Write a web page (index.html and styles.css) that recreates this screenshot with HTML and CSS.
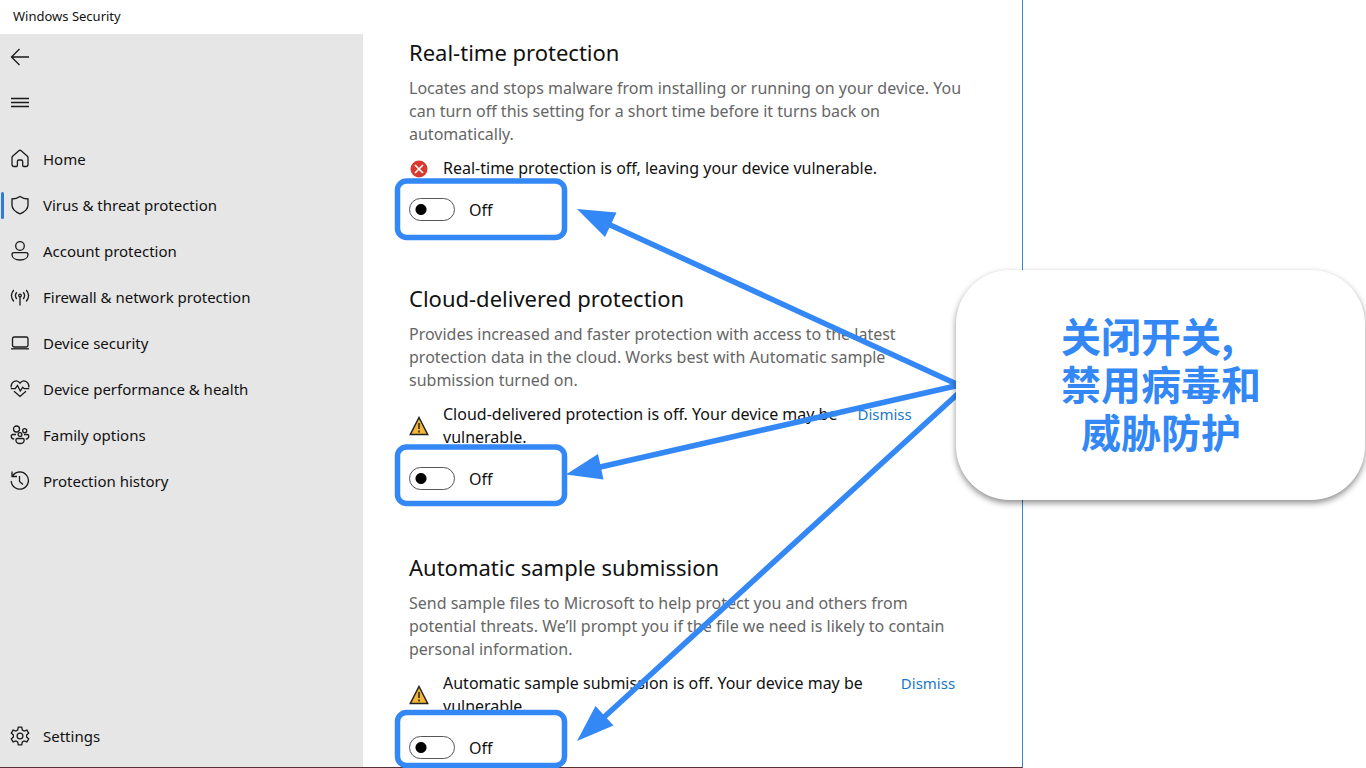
FILE: index.html
```html
<!DOCTYPE html>
<html lang="en">
<head>
<meta charset="UTF-8">
<meta name="viewport" content="width=device-width, initial-scale=1.0">
<title>Windows Security</title>
<link rel="stylesheet" href="styles.css">
</head>
<body>
  <div class="window">
    <header class="titlebar">Windows Security</header>
    <div class="columns">
      <aside class="sidebar">
        <button class="icon-button" type="button" aria-label="Back">
          <svg class="icon" viewBox="0 0 20 20"><path d="M19 10H1.500M9.500 2 1.500 10l8 8"/></svg>
        </button>
        <button class="icon-button" type="button" aria-label="Menu">
          <svg class="icon" viewBox="0 0 20 20"><path d="M1 5.500h18M1 9.500h18M1 13.500h18"/></svg>
        </button>
        <nav class="nav">
          <a href="#">
            <svg class="icon" viewBox="0 0 20 20"><path d="M2 8.500 Q2 7.800 2.600 7.200L8.800 1.700Q10 .8 11.200 1.700L17.400 7.200Q18 7.800 18 8.500V15.500Q18 17.500 16 17.500H13.700Q12.700 17.500 12.700 16.500V12.500Q12.700 11 11.200 11H8.900Q7.400 11 7.400 12.500V16.500Q7.400 17.500 6.400 17.500H4Q2 17.500 2 15.500Z"/></svg>
            Home
          </a>
          <a href="#" class="active">
            <svg class="icon" viewBox="0 0 20 20"><path d="M10 1.500Q13.500 4 18 4V10Q18 15.500 10 18.800Q2 15.500 2 10V4Q6.500 4 10 1.500Z"/></svg>
            Virus &amp; threat protection
          </a>
          <a href="#">
            <svg class="icon" viewBox="0 0 20 20"><circle cx="10" cy="5" r="4.300"/><path d="M4 11.700H16Q18 11.700 18 13.500C18 17 14.500 19 10 19S2 17 2 13.500Q2 11.700 4 11.700Z"/></svg>
            Account protection
          </a>
          <a href="#">
            <svg class="icon" viewBox="0 0 20 20"><circle cx="10" cy="8.500" r="1.300"/><path d="M10 10v8.500M6.800 5.300Q4 8.500 6.800 12M13.200 5.300Q16 8.500 13.200 12M3.800 3Q-1 8.500 3.800 14.500M16.200 3Q21 8.500 16.200 14.500"/></svg>
            Firewall &amp; network protection
          </a>
          <a href="#">
            <svg class="icon" viewBox="0 0 20 20"><rect x="2.500" y="4" width="15.500" height="10" rx="1.800"/><path d="M1 15.800h18"/></svg>
            Device security
          </a>
          <a href="#">
            <svg class="icon" viewBox="0 0 20 20"><path d="M1.200 8.500C.5 3 6.500-.5 10 4.200C13.500-.5 19.500 3 18.800 8.500M.8 9.700H5.200L7.500 6.500 10.300 12 12.700 8.200 14.200 9.700H19.200M4 12.200 10 17.500 16 12.200"/></svg>
            Device performance &amp; health
          </a>
          <a href="#">
            <svg class="icon" viewBox="0 0 20 20"><circle cx="6.500" cy="4" r="3"/><circle cx="14.700" cy="5.700" r="2"/><circle cx="10" cy="9.500" r="1.900"/><path d="M6 9.500H3Q1.200 9.500 1.200 11.200Q1.200 13.700 4.200 14.200M14 9.500H17Q18.800 9.500 18.800 11Q18.800 13.700 15.800 14.200M7.500 13.500H12.700Q14.200 13.500 14.200 15C14.200 17.500 12.500 18.500 10 18.500S5.900 17.500 5.900 15Q5.900 13.500 7.500 13.500Z"/></svg>
            Family options
          </a>
          <a href="#">
            <svg class="icon" viewBox="0 0 20 20"><path d="M2 .5V5.500H7M2.500 5A8.600 8.600 0 1 1 1.200 10M9.500 5V10.500L13 13.500"/></svg>
            Protection history
          </a>
        </nav>
        <nav class="nav nav-bottom">
          <a href="#">
            <svg class="icon" viewBox="0 0 20 20"><circle cx="10" cy="10" r="2.900"/><path d="M8.300 1.200H11.700L12.300 4 14.100 5 16.900 4.100 18.700 7.100 16.600 9V11L18.700 12.900 16.900 15.900 14.100 15 12.300 16 11.700 18.800H8.300L7.700 16 5.900 15 3.100 15.900 1.300 12.900 3.400 11V9L1.300 7.100 3.100 4.100 5.900 5 7.700 4Z"/></svg>
            Settings
          </a>
        </nav>
      </aside>

      <main class="content">
        <section class="setting">
          <h2>Real-time protection</h2>
          <p class="description">Locates and stops malware from installing or running on your device. You can turn off this setting for a short time before it turns back on automatically.</p>
          <div class="status">
            <svg class="status-icon" viewBox="0 0 20 20"><circle cx="10" cy="10" r="8.500" fill="#d93a30"/><path d="M6 6l8 8M14 6l-8 8" stroke="#fff" stroke-width="1.600"/></svg>
            <p>Real-time protection is off, leaving your device vulnerable.</p>
          </div>
          <label class="toggle"><input type="checkbox"> Off</label>
        </section>

        <section class="setting">
          <h2>Cloud-delivered protection</h2>
          <p class="description">Provides increased and faster protection with access to the latest protection data in the cloud. Works best with Automatic sample submission turned on.</p>
          <div class="status">
            <svg class="status-icon" viewBox="0 0 20 20"><path d="M10 1.500 18.700 18.500H1.300Z" fill="#f3b63a" stroke="#222" stroke-width="1.500"/><path d="M10 7v6M10 14.500v2" stroke="#222" stroke-width="1.500"/></svg>
            <p>Cloud-delivered protection is off. Your device may be<br>vulnerable.</p>
            <a href="#" class="dismiss">Dismiss</a>
          </div>
          <label class="toggle"><input type="checkbox"> Off</label>
        </section>

        <section class="setting">
          <h2>Automatic sample submission</h2>
          <p class="description">Send sample files to Microsoft to help protect you and others from potential threats. We’ll prompt you if the file we need is likely to contain personal information.</p>
          <div class="status status-wide">
            <svg class="status-icon" viewBox="0 0 20 20"><path d="M10 1.500 18.700 18.500H1.300Z" fill="#f3b63a" stroke="#222" stroke-width="1.500"/><path d="M10 7v6M10 14.500v2" stroke="#222" stroke-width="1.500"/></svg>
            <p>Automatic sample submission is off. Your device may be<br>vulnerable.</p>
            <a href="#" class="dismiss">Dismiss</a>
          </div>
          <label class="toggle"><input type="checkbox"> Off</label>
        </section>
      </main>
    </div>
  </div>

  <!-- Highlight boxes and arrows drawn over the window -->
  <svg class="marks" width="1023" height="768" viewBox="0 0 1023 768">
    <g fill="none" stroke="#3388f6" stroke-width="5.500">
      <rect x="397.500" y="181" width="167" height="56.500" rx="9"/>
      <rect x="397.500" y="447" width="167" height="56.500" rx="9"/>
      <rect x="397.500" y="712.500" width="167" height="53" rx="9"/>
      <path d="M962 386.500 608 224M962 384.500 598 467.500M962 390 602 719"/>
    </g>
    <g fill="#3388f6">
      <path d="M577 209 616.500 212.500 605 237Z"/>
      <path d="M566 474.500 598 454 603.500 479.500Z"/>
      <path d="M577 741 595.500 706 613.500 725.500Z"/>
    </g>
  </svg>
  <div class="callout">关闭开关,<br>禁用病毒和<br><span class="last-line">威胁防护</span></div>
</body>
</html>
```
FILE: styles.css
```css
* {
  box-sizing: border-box;
}

body {
  position: relative;
  margin: 0;
  height: 100vh;
  overflow: hidden;
  background-color: #fff;
  color: #111;
  font-family: "Noto Sans", "Noto Sans CJK SC", sans-serif;
  font-size: 16px;
}

h2, p {
  margin: 0;
}

a {
  text-decoration: none;
}

.window {
  display: flex;
  flex-direction: column;
  height: 100vh;
  margin-right: 343px;
  border-right: 1px solid #3c83d0;
  border-bottom: 1px solid #5a3038;
}

.titlebar {
  flex: none;
  height: 34px;
  padding-left: 13px;
  font-size: 13px;
  line-height: 33px;
}

.columns {
  display: flex;
  flex: 1;
  min-height: 0;
}

/* Left navigation */
.sidebar {
  display: flex;
  flex-direction: column;
  flex: none;
  width: 363px;
  background-color: #e6e6e6;
}

.icon {
  flex: none;
  width: 20px;
  height: 20px;
  fill: none;
  stroke: #1a1a1a;
  stroke-width: 1.3;
}

.icon-button {
  display: flex;
  align-items: center;
  width: 46px;
  height: 46px;
  padding: 0 10px;
  border: none;
  background: none;
}

.nav {
  margin-top: 10px;
}

.nav a {
  display: flex;
  align-items: center;
  gap: 13px;
  height: 46px;
  padding-left: 10px;
  color: #111;
  font-size: 15px;
}

.nav .active {
  padding-left: 1px;
  gap: 13px;
}

/* Blue bar beside the current page */
.nav .active::before {
  content: "";
  width: 3px;
  height: 27px;
  margin-right: -7px;
  border-radius: 2px;
  background-color: #2f7bd8;
}

.nav-bottom {
  margin-top: auto;
  margin-bottom: 8px;
}

/* Settings */
.content {
  flex: 1;
  padding: 2px 40px 0 46px;
}

.setting {
  margin-bottom: 61px;
}

h2 {
  font-size: 22px;
  font-weight: normal;
  line-height: 32px;
}

.description {
  max-width: 560px;
  margin-top: 9px;
  color: #666;
  line-height: 23px;
}

.status {
  display: flex;
  align-items: center;
  gap: 14px;
  margin-top: 11px;
  line-height: 23px;
}

.status-icon {
  flex: none;
  width: 20px;
  height: 20px;
}

.dismiss {
  align-self: flex-start;
  margin-left: 6px;
  color: #1a78c8;
  font-size: 15px;
}

.status-wide .dismiss {
  margin-left: 24px;
}

.toggle {
  display: flex;
  align-items: center;
  gap: 14px;
  height: 23px;
  margin-top: 18px;
}

.toggle input {
  appearance: none;
  flex: none;
  width: 46px;
  height: 23px;
  margin: 0;
  border: 1px solid #555;
  border-radius: 12px;
  background: radial-gradient(circle at 11px 50%, #000 5px, transparent 6px);
}

/* Callout */
.marks {
  position: absolute;
  top: 0;
  left: 0;
}

.callout {
  position: absolute;
  top: 270px;
  right: 1px;
  width: 409px;
  height: 230px;
  padding: 41px 0 0 105px;
  border-radius: 54px;
  background-color: #fff;
  box-shadow: 0 3px 6px rgba(0, 0, 0, 0.45);
  color: #3388f6;
  font-family: "Noto Sans CJK SC", sans-serif;
  font-size: 40px;
  font-weight: bold;
  line-height: 48px;
}

.last-line {
  margin-left: 20px;
}
```
